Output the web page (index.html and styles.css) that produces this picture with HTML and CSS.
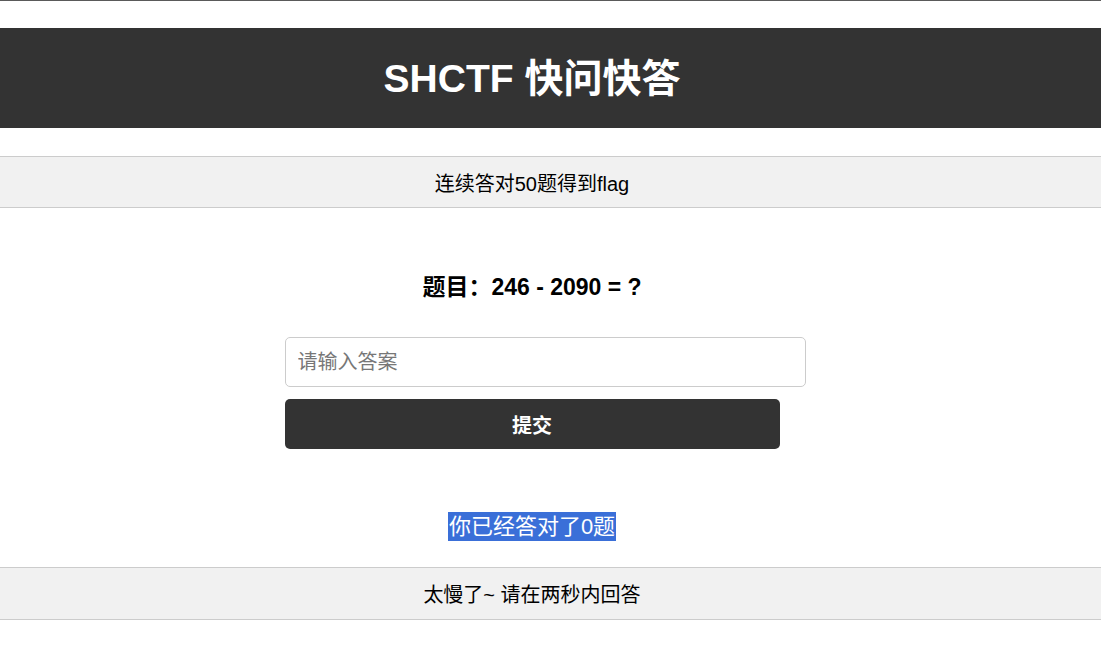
FILE: index.html
```html
<!DOCTYPE html>
<html lang="zh">
<head>
<meta charset="utf-8">
<title>SHCTF 快问快答</title>
<link rel="stylesheet" href="styles.css">
</head>
<body>
<div class="topline"></div>
<header class="header">
  <h1 class="title">SHCTF 快问快答</h1>
</header>
<div class="bar bar-info">连续答对50题得到flag</div>
<main class="main">
  <h2 class="question">题目：246 - 2090 = ?</h2>
  <form class="form">
    <input class="answer" type="text" placeholder="请输入答案">
    <button class="submit" type="button">提交</button>
  </form>
  <p class="count"><span class="count-text">你已经答对了0题</span></p>
</main>
<div class="bar bar-footer">太慢了~ 请在两秒内回答</div>
</body>
</html>
```
FILE: styles.css
```css
html, body {
  margin: 0;
  padding: 0;
  background: #fff;
}
body {
  font-family: "Liberation Sans", Arial, "Noto Sans CJK SC", sans-serif;
  color: #000;
}
.topline {
  height: 1px;
  background: #5a5a5a;
}
.header {
  margin-top: 27px;
  height: 100px;
  background: #333;
  display: flex;
  align-items: center;
  justify-content: center;
  padding-right: 37px;
}
.title {
  margin: 0;
  color: #fff;
  font-size: 39px;
  font-weight: bold;
  line-height: 1;
}
.bar {
  background: #f1f1f1;
  border-top: 1px solid #ccc;
  border-bottom: 1px solid #ccc;
  height: 50px;
  display: flex;
  align-items: center;
  justify-content: center;
  padding-right: 37px;
  font-size: 20px;
}
.bar-info {
  margin-top: 28px;
}
.main {
  padding-right: 37px;
  display: flex;
  flex-direction: column;
  align-items: center;
}
.question {
  margin: 66px 0 0;
  height: 26px;
  font-size: 23px;
  font-weight: bold;
  line-height: 26px;
}
.form {
  width: 495px;
  margin-top: 37px;
  display: flex;
  flex-direction: column;
  align-items: flex-start;
}
.answer {
  box-sizing: content-box;
  width: 100%;
  height: 48px;
  padding: 0 12px;
  margin: 0;
  border: 1px solid #ccc;
  border-radius: 5px;
  font-family: inherit;
  font-size: 20px;
  color: #000;
  outline: none;
}
.answer::placeholder {
  color: #777;
}
.submit {
  box-sizing: border-box;
  width: 100%;
  height: 50px;
  margin-top: 12px;
  border: none;
  border-radius: 5px;
  background: #333;
  color: #fff;
  font-family: inherit;
  font-size: 20px;
  font-weight: bold;
  padding-top: 2px;
}
.count {
  margin: 63px 0 0;
  height: 30px;
  line-height: 29px;
  margin-bottom: 25px;
  font-size: 22px;
}
.count-text {
  display: inline-block;
  height: 29px;
  padding: 0 1px;
  background: #3a6fd8;
  color: #fff;
}
.bar-footer {
  height: 51px;
}
```
